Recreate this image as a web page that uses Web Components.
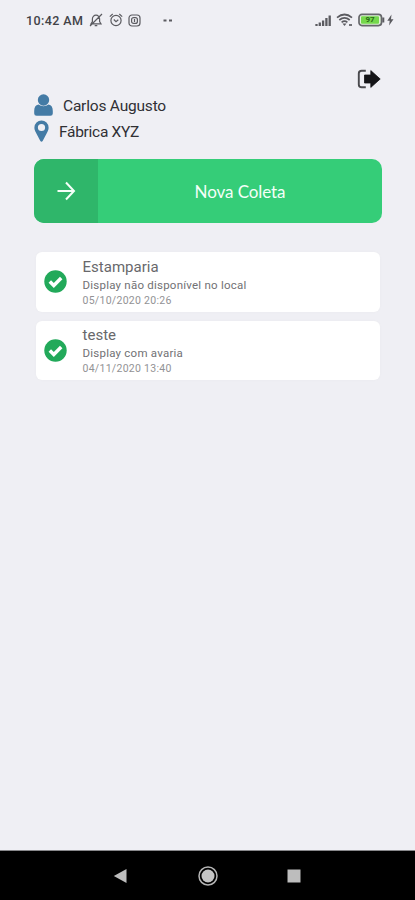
<!DOCTYPE html>
<html lang="pt-BR">
<head>
<meta charset="utf-8">
<title>Coletas</title>
<style>
html,body{margin:0;height:100%;background:#efeff4}
body{font-family:Roboto,"Noto Sans",sans-serif;overflow:hidden}
</style>
</head>
<body>
<app-screen>
  <status-bar slot="status"></status-bar>
  <logout-button></logout-button>
  <user-info>
    <info-line style="--gap:10px;--track:-0.2px"><app-icon slot="icon" name="user"></app-icon>Carlos Augusto</info-line>
    <info-line style="--gap:10px;--track:-0.28px"><app-icon slot="icon" name="pin"></app-icon>Fábrica XYZ</info-line>
  </user-info>
  <action-button>Nova Coleta</action-button>
  <collect-list>
    <collect-card><span slot="title">Estamparia</span><span slot="detail">Display não disponível no local</span><span slot="date">05/10/2020 20:26</span></collect-card>
    <collect-card><span slot="title">teste</span><span slot="detail">Display com avaria</span><span slot="date">04/11/2020 13:40</span></collect-card>
  </collect-list>
  <nav-bar slot="nav"></nav-bar>
</app-screen>
<script>
const define = (name, html) => customElements.define(name, class extends HTMLElement {
  constructor() {
    super();
    this.attachShadow({ mode: 'open' }).innerHTML = html;
  }
});

const icons = {
  user: '<svg width="19" height="23" viewBox="0 0 19 23"><circle cx="9.5" cy="6" r="5.7"/><path d="M4.400 10.600C1.500 11 .2 13.500.2 17v2.400q0 2.400 2.400 2.400h13.800q2.400 0 2.400-2.400V17c0-3.500-1.300-6-4.200-6.400q-5.100 3.300-10.200 0z"/></svg>',
  pin: '<svg width="15" height="22" viewBox="0 0 15 22"><path fill-rule="evenodd" d="M7.500.4A7.100 7.100 0 0 0 .4 7.500c0 2 .6 3.400 1.200 4.500l4.600 8.700q1.300 2 2.600 0l4.600-8.700c.6-1.100 1.200-2.500 1.200-4.500A7.100 7.100 0 0 0 7.500.4zm0 3.500a3.600 3.600 0 1 1 0 7.200 3.600 3.600 0 0 1 0-7.200z"/></svg>',
  check: '<svg width="23" height="23" viewBox="0 0 23 23"><circle cx="11.500" cy="11.500" r="11.200"/><path d="M5.800 11.500l4 4 7.400-7.400" fill="none" stroke="#fff" stroke-width="3.500"/></svg>'
};
customElements.define('app-icon', class extends HTMLElement {
  constructor() { super(); this.attachShadow({ mode: 'open' }); }
  connectedCallback() {
    this.shadowRoot.innerHTML = '<style>:host{display:block;fill:currentColor}svg{display:block}</style>' + icons[this.getAttribute('name')];
  }
});

define('app-screen', `<style>
:host{display:flex;flex-direction:column;width:415px;height:900px;background:#efeff4}
main{flex:1;display:flex;flex-direction:column;padding:29px 33px 0 34px}
</style><slot name="status"></slot><main><slot></slot></main><slot name="nav"></slot>`);

define('status-bar', `<style>
:host{display:flex;align-items:center;box-sizing:border-box;height:40px;padding:0 21px 0 26px;color:#5b5b60}
.time{font-size:12.500px;font-weight:500;letter-spacing:.4px;color:#424247;width:63px;white-space:nowrap}
svg{display:block;fill:none;stroke:currentColor}
.right{margin-left:auto;display:flex;align-items:center}
.battery{display:grid;place-items:center}
.battery>*{grid-area:1/1}
.battery span{font-size:8px;font-weight:700;line-height:10px;color:#276b16;margin-right:3px}
</style>
<span class="time">10:42 AM</span>
<svg width="14" height="14" viewBox="0 0 14 14" stroke-width="1.200"><path d="M2 10.800h10l-1.400-2.300V6A3.600 3.600 0 0 0 7 2.200 3.600 3.600 0 0 0 3.400 6v2.500zM5.700 12.600h2.600M1 13L13 1"/></svg>
<svg width="14" height="14" viewBox="0 0 14 14" stroke-width="1.200" style="margin-left:6px"><circle cx="7" cy="7.500" r="5.100"/><path d="M.8 3.600L3.700 1M13.200 3.600L10.300 1M4.800 6.500L7 8.700l2.300-2"/></svg>
<svg width="13" height="13" viewBox="0 0 13 13" stroke-width="1.200" style="margin-left:5px"><rect x="1" y="1" width="11" height="11" rx="3"/><rect x="3.600" y="3.600" width="5.800" height="5.800" rx="2"/><path d="M6.500 5v3"/></svg>
<svg width="10" height="3" viewBox="0 0 10 3" style="margin-left:22px"><path d="M.5 1.500h3M6 1.500h3" stroke-width="2"/></svg>
<div class="right">
<svg width="17" height="13" viewBox="0 0 17 13" stroke-width="2.300"><path d="M1.500 12v-2M4.800 12V8.500M8.100 12V6.500M11.400 12V4M14.700 12V1.500"/></svg>
<svg width="19" height="14" viewBox="0 0 19 14" style="margin-left:4px" stroke-width="1.700"><path d="M1 4.600Q8.500-1.600 16 4.600M3.300 7Q8.500 2.600 13.700 7M5.600 9.300Q8.500 7 11.400 9.300"/><path d="M6.500 10.500h4l-2 2.400z" fill="currentColor" stroke="none"/><path d="M13 12h3"/></svg>
<div class="battery" style="margin-left:3px"><svg width="27" height="14" viewBox="0 0 27 14"><rect x="1" y="1.400" width="22.500" height="11.200" rx="3" fill="#dff3d7" stroke="#66666b" stroke-width="1.700"/><rect x="3" y="3.200" width="18" height="7.600" rx="1" fill="#75d84c" stroke="none"/><path d="M25.300 4.500v5" stroke-width="2"/></svg><span>97</span></div>
<svg width="7" height="12" viewBox="0 0 7 12" style="margin-left:2px"><path d="M4.500.5L.3 6.700h2.400l-.6 4.800 4.400-6.300H4z" fill="currentColor" stroke="none"/></svg>
</div>`);

define('logout-button', `<style>
:host{display:flex;justify-content:flex-end;padding-right:1.500px;height:20px}svg{display:block}
</style><svg width="24" height="20" viewBox="0 0 24 20"><path d="M8.800 1.800H4.700Q1.800 1.800 1.800 4.600v10.800q0 2.800 2.900 2.800h4.100" fill="none" stroke="#4a4a4e" stroke-width="1.900"/><path d="M7.500 6h6.300V1.600L23.200 10l-9.400 8.400V14H7.500z" fill="#151518" stroke="#151518" stroke-width=".8" stroke-linejoin="round"/></svg>`);

define('user-info', `<style>:host{display:flex;flex-direction:column;gap:2px;padding-top:4px}</style><slot></slot>`);

define('info-line', `<style>
:host{display:flex;align-items:center;height:24px;gap:var(--gap);font-size:15.500px;letter-spacing:var(--track);color:#303034}
::slotted(app-icon){color:#447ba5}
span{padding-top:2px}
</style><slot name="icon"></slot><span><slot></slot></span>`);

define('action-button', `<style>
:host{display:flex;height:64px;margin-top:16px;margin-bottom:29px;border-radius:10px;overflow:hidden;background:#35cd78;color:#f4fff8}
.side{width:64px;display:grid;place-items:center;background:#2fb66a}
.label{flex:1;display:grid;place-items:center;font:17px/22px Lato,sans-serif;letter-spacing:-.08px;padding-top:1px}
</style><div class="side"><svg width="20" height="20" viewBox="0 0 20 20" fill="none" stroke="currentColor" stroke-width="2"><path d="M1.500 10h16M10 1.500l8 8.500-8 8.500"/></svg></div><div class="label"><slot></slot></div>`);

define('collect-list', `<style>:host{display:flex;flex-direction:column;gap:9px;margin:0 2px}</style><slot></slot>`);

define('collect-card', `<style>
:host{display:flex;align-items:center;height:59.500px;border-radius:6px;background:#fff;box-shadow:0 0 2px #e9e9ec}
app-icon{color:#22a95a;margin-left:8px}
.text{margin-left:15.500px;padding-top:2px;display:flex;flex-direction:column;white-space:nowrap}
.t{font-size:15px;line-height:19px;letter-spacing:.02px;color:#68686b}
.d{font-size:11.500px;line-height:16px;letter-spacing:.23px;color:#717174}
.h{font-size:10.500px;line-height:15px;letter-spacing:.28px;color:#929295}
</style><app-icon name="check"></app-icon><div class="text"><div class="t"><slot name="title"></slot></div><div class="d"><slot name="detail"></slot></div><div class="h"><slot name="date"></slot></div></div>`);

define('nav-bar', `<style>
:host{display:flex;align-items:center;box-sizing:border-box;height:50px;background:#000;border-top:1px solid #88888b;padding-left:113px}
svg{display:block}
</style>
<svg width="14" height="16" viewBox="0 0 14 16"><path d="M.8 8L13.500 1v14z" fill="#bdbdbd"/></svg>
<svg width="22" height="22" viewBox="0 0 22 22" style="margin-left:70px"><circle cx="11" cy="11" r="9" fill="none" stroke="#b5b5b5" stroke-width="1.500"/><circle cx="11" cy="11" r="6.500" fill="#c4c4c4"/></svg>
<svg width="14" height="14" viewBox="0 0 14 14" style="margin-left:68px"><path d="M.5.5h13v13H.5z" fill="#bdbdbd"/></svg>`);
</script>
</body>
</html>
